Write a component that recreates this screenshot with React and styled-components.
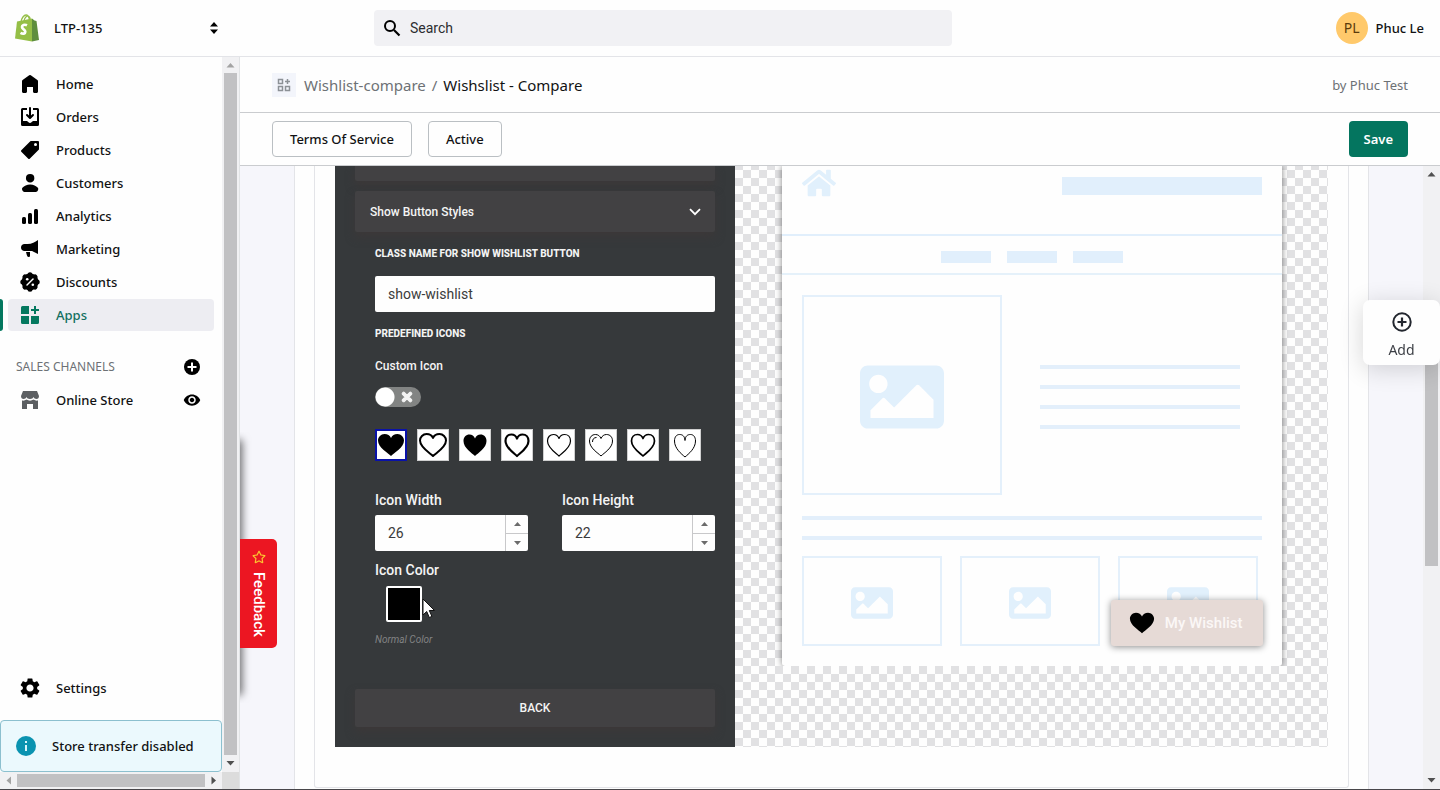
import { useState } from 'react'
import styled, { createGlobalStyle } from 'styled-components'
import { MdSettings, MdVisibility } from 'react-icons/md'
import { FaHome, FaImage, FaTimes, FaRegStar } from 'react-icons/fa'

const navItems = [
  { name: 'Home', icon: HomeIcon },
  { name: 'Orders', icon: OrdersIcon },
  { name: 'Products', icon: ProductsIcon },
  { name: 'Customers', icon: CustomersIcon },
  { name: 'Analytics', icon: AnalyticsIcon },
  { name: 'Marketing', icon: MarketingIcon },
  { name: 'Discounts', icon: DiscountsIcon },
  { name: 'Apps', icon: AppsIcon },
]

const wide =
  'M16 26 C13 23 3 17.500 3 10.500 C3 7 6 4 9.500 4 C12.500 4 15 5.500 16 8 C17 5.500 19.500 4 22.500 4 C26 4 29 7 29 10.500 C29 17.500 19 23 16 26 Z'
const round =
  'M16 26 C13 23 4.500 18 4.500 11 C4.500 7 7 4.500 10.500 4.500 C13 4.500 15 6 16 8.500 C17 6 19 4.500 21.500 4.500 C25 4.500 27.500 7 27.500 11 C27.500 18 19 23 16 26 Z'
const slim =
  'M16 27 C12.500 24 5.500 18.500 5.500 11 C5.500 7 7.500 4.500 10.500 4.500 C13.500 4.500 15.700 6 16 10.500 C16.300 6 18.500 4.500 21.500 4.500 C24.500 4.500 26.500 7 26.500 11 C26.500 18.500 19.500 24 16 27 Z'

const hearts = [
  { d: wide, filled: true, stroke: 0 },
  { d: wide, stroke: 2 },
  { d: round, filled: true, stroke: 0 },
  { d: round, stroke: 2.2 },
  { d: round, stroke: 1.2 },
  { d: round, stroke: 1, shine: true },
  { d: round, stroke: 1.7 },
  { d: slim, stroke: 1 },
]

export default function App() {
  return (
    <Page>
      <GlobalStyle />
      <Header>
        <StoreSwitch type="button">
          <ShopLogo />
          <span>LTP-135</span>
          <svg width="20" height="20" viewBox="0 0 20 20">
            <path d="M10 4l4 4.500H6zM10 16l-4-4.500h8z" />
          </svg>
        </StoreSwitch>
        <SearchBox>
          <svg width="20" height="20" viewBox="0 0 20 20" fill="none">
            <circle cx="8" cy="8" r="5" stroke="#000" strokeWidth="2" />
            <path d="M12 12l5.500 5.500" stroke="#000" strokeWidth="2.200" />
          </svg>
          <input type="search" aria-label="Search" placeholder="Search" />
        </SearchBox>
        <User type="button">
          <Avatar>PL</Avatar>
          Phuc Le
        </User>
      </Header>
      <Body>
        <Sidebar />
        <Main>
          <TitleBar>
            <AppBadge>
              <svg width="14" height="14" viewBox="0 0 14 14" fill="none" stroke="#8c9196" strokeWidth="1.500">
                <path d="M1.500 1.500h4v4h-4zM1.500 8.500h4v4h-4zM8.500 8.500h4v4h-4zM10.500 1v5M8 3.500h5" />
              </svg>
            </AppBadge>
            <Crumbs>
              <a href="#app">Wishlist-compare</a>
              <span>/</span>
              <h1>Wishslist - Compare</h1>
            </Crumbs>
            <Author>by Phuc Test</Author>
          </TitleBar>
          <ActionBar>
            <Button type="button">Terms Of Service</Button>
            <Button type="button">Active</Button>
            <Button type="button" $primary>
              Save
            </Button>
          </ActionBar>
          <Content>
            <Scroll>
              <Sheet>
                <Card>
                  <Settings />
                  <Preview />
                </Card>
              </Sheet>
            </Scroll>
            <VerticalBar before={25} thumb={40} after={35} />
          </Content>
        </Main>
      </Body>
      <DrawerEdge />
      <Feedback type="button">
        <FaRegStar size={14} color="#fbc531" />
        Feedback
      </Feedback>
      <AddButton type="button">
        <svg width="20" height="20" viewBox="0 0 20 20" fill="none" stroke="#23272f">
          <circle cx="10" cy="10" r="8.700" strokeWidth="2" />
          <path d="M10 5.500v9M5.500 10h9" strokeWidth="2.200" />
        </svg>
        Add
      </AddButton>
    </Page>
  )
}

function Sidebar() {
  return (
    <Aside>
      <SideRow>
        <Nav>
          {navItems.map(({ name, icon: Icon }) => (
            <NavLink key={name} href={`#${name}`} $active={name === 'Apps'}>
              <Icon />
              {name}
            </NavLink>
          ))}
          <SectionTitle>
            <h2>SALES CHANNELS</h2>
            <IconButton type="button" aria-label="Add channel">
              <svg width="16" height="16" viewBox="0 0 16 16">
                <circle cx="8" cy="8" r="8" />
                <path d="M8 3.500v9M3.500 8h9" stroke="#fff" strokeWidth="2" />
              </svg>
            </IconButton>
          </SectionTitle>
          <ChannelRow>
            <NavLink href="#store">
              <StoreIcon />
              Online Store
            </NavLink>
            <IconButton type="button" aria-label="View store">
              <MdVisibility size={18} />
            </IconButton>
          </ChannelRow>
          <Bottom>
            <NavLink href="#settings">
              <MdSettings size={20} viewBox="2 2 20 20" />
              Settings
            </NavLink>
          </Bottom>
          <Notice>
            <svg width="20" height="20" viewBox="0 0 20 20">
              <circle cx="10" cy="10" r="10" fill="#0a93b0" />
              <path d="M9 9h2v6H9zM9 5h2v2H9z" fill="#d8f5fb" />
            </svg>
            Store transfer disabled
          </Notice>
        </Nav>
        <VerticalBar before={0} thumb={100} after={0} muted />
      </SideRow>
      <BottomBar>
        <HorizontalTrack>
          <svg width="17" height="9" viewBox="0 0 17 9" fill="#a3a3a3">
            <path d="M11 0.500v8L6.500 4.500z" />
          </svg>
          <HorizontalThumb />
          <svg width="17" height="9" viewBox="0 0 17 9" fill="#505050">
            <path d="M6.500 0.500v8L11 4.500z" />
          </svg>
        </HorizontalTrack>
        <Corner />
      </BottomBar>
    </Aside>
  )
}

function Settings() {
  const [className, setClassName] = useState('show-wishlist')
  const [custom, setCustom] = useState(false)
  const [selected, setSelected] = useState(0)
  const [width, setWidth] = useState(26)
  const [height, setHeight] = useState(22)

  return (
    <Panel>
      <PreviousSection />
      <SectionHeader type="button" aria-expanded="true">
        Show Button Styles
        <svg width="12" height="8" viewBox="0 0 12 8" fill="none">
          <path d="M1 1.200l5 5 5-5" stroke="#fff" strokeWidth="1.800" />
        </svg>
      </SectionHeader>
      <Fields>
        <CapsLabel htmlFor="class-name">Class name for show wishlist button</CapsLabel>
        <TextInput
          id="class-name"
          value={className}
          onChange={(e) => setClassName(e.target.value)}
        />
        <CapsLabel as="h3">Predefined icons</CapsLabel>
        <SmallLabel htmlFor="custom-icon">Custom Icon</SmallLabel>
        <Toggle>
          <input
            id="custom-icon"
            type="checkbox"
            role="switch"
            checked={custom}
            onChange={(e) => setCustom(e.target.checked)}
          />
          <FaTimes size={14} />
        </Toggle>
        <IconList>
          {hearts.map((heart, i) => (
            <IconOption
              key={i}
              type="button"
              aria-label={`Icon ${i + 1}`}
              $selected={selected === i}
              onClick={() => setSelected(i)}
            >
              <Heart {...heart} size={28} />
            </IconOption>
          ))}
        </IconList>
        <Sizes>
          <NumberField id="icon-width" label="Icon Width" value={width} onChange={setWidth} />
          <NumberField id="icon-height" label="Icon Height" value={height} onChange={setHeight} />
        </Sizes>
        <FieldLabel as="h3">Icon Color</FieldLabel>
        <ColorRow>
          <Swatch type="button" aria-label="Icon Color" />
          <Cursor width="14" height="21" viewBox="0 0 14 21">
            <path
              d="M1 1v16l3.700-3.500 2.600 6 2.600-1.100-2.600-5.900h5.200z"
              fill="#fff"
              stroke="#111"
            />
          </Cursor>
        </ColorRow>
        <Hint>Normal Color</Hint>
      </Fields>
      <BackButton type="button">BACK</BackButton>
    </Panel>
  )
}

function NumberField({ id, label, value, onChange }) {
  return (
    <div>
      <FieldLabel htmlFor={id}>{label}</FieldLabel>
      <NumberBox>
        <input
          id={id}
          inputMode="numeric"
          value={value}
          onChange={(e) => onChange(Number(e.target.value) || 0)}
        />
        <Spinner>
          <button type="button" aria-label={`Increase ${label}`} onClick={() => onChange(value + 1)}>
            <svg width="7" height="4" viewBox="0 0 7 4">
              <path d="M0 4L3.500 0 7 4z" />
            </svg>
          </button>
          <button type="button" aria-label={`Decrease ${label}`} onClick={() => onChange(value - 1)}>
            <svg width="7" height="4" viewBox="0 0 7 4">
              <path d="M0 0l3.500 4L7 0z" />
            </svg>
          </button>
        </Spinner>
      </NumberBox>
    </div>
  )
}

function Preview() {
  return (
    <Checker>
      <Clip>
        <MockPage>
          <MockTop>
            <FaHome size={34} />
            <Block $w={200} $h={18} />
          </MockTop>
          <MockNav>
            <Block $w={50} $h={12} />
            <Block $w={50} $h={12} />
            <Block $w={50} $h={12} />
          </MockNav>
          <MockBody>
            <Product>
              <ImageBox $w={200} $h={200}>
                <FaImage size={84} />
              </ImageBox>
              <Summary>
                <Line />
                <Line />
                <Line />
                <Line />
              </Summary>
            </Product>
            <Lines>
              <Line />
              <Line />
            </Lines>
            <Thumbs>
              {[0, 1, 2].map((n) => (
                <ImageBox key={n} $w={140} $h={90}>
                  <FaImage size={42} />
                </ImageBox>
              ))}
            </Thumbs>
          </MockBody>
          <WishlistButton type="button">
            <Heart d={wide} filled stroke={0} size={26} />
            My Wishlist
          </WishlistButton>
        </MockPage>
      </Clip>
    </Checker>
  )
}

function VerticalBar({ before, thumb, after, muted }) {
  return (
    <Track>
      <svg width="17" height="16" viewBox="0 0 17 16" fill={muted ? '#a3a3a3' : '#505050'}>
        <path d="M4.500 10.500h8L8.500 6z" />
      </svg>
      <Portion $grow={before} />
      <Thumb $grow={thumb} />
      <Portion $grow={after} />
      <svg width="17" height="17" viewBox="0 0 17 17" fill="#505050">
        <path d="M4.500 6h8l-4 4.500z" />
      </svg>
    </Track>
  )
}

function Heart({ d, filled, stroke, shine, size }) {
  return (
    <svg width={size} height={size} viewBox="2 1 28 28">
      <path
        d={d}
        fill={filled ? '#000' : 'none'}
        stroke="#000"
        strokeWidth={stroke}
        strokeLinejoin="round"
      />
      {shine && <path d="M7.500 12c0-3 1.500-4.500 4-4.500" fill="none" stroke="#000" strokeWidth="1" />}
    </svg>
  )
}

function ShopLogo() {
  return (
    <svg width="24" height="28" viewBox="0 0 24 28" fill="none">
      <path d="M6 8c.5-4 3-7 5-7 2 0 3 2 3.500 5M9 7c.5-3.500 3-5.500 4.500-5 1.200.5 1.700 2 2 4" stroke="#95bf47" strokeWidth="1.300" />
      <path d="M2 7.500l15-3v23L0 24.500z" fill="#95bf47" />
      <path d="M17 4.500l2.500 2 2 .5L24 26l-7 1.500z" fill="#5e8e3e" />
      <path
        d="M12 11.300c-2.500-1.200-5-.3-5 1.800 0 2.300 3.300 2.300 3.300 4.600 0 2-2.300 2.600-4.800 1.100"
        stroke="#fff"
        strokeWidth="2.700"
      />
    </svg>
  )
}

function NavSvg({ children }) {
  return (
    <svg width="20" height="20" viewBox="0 0 20 20" fill="currentColor">
      {children}
    </svg>
  )
}

function HomeIcon() {
  return (
    <NavSvg>
      <path d="M18 7.261V17.500c0 .841-.672 1.500-1.500 1.500h-2c-.828 0-1.500-.659-1.500-1.500V13H7v4.477C7 18.318 6.328 19 5.500 19h-2c-.828 0-1.500-.682-1.500-1.523V7.261a1.500 1.500 0 0 1 .615-1.210l6.590-4.820a1.481 1.481 0 0 1 1.590 0l6.590 4.820A1.500 1.500 0 0 1 18 7.260z" />
    </NavSvg>
  )
}

function OrdersIcon() {
  return (
    <NavSvg>
      <path d="M11 1a1 1 0 1 0-2 0v7.586L7.707 7.293a1 1 0 0 0-1.414 1.414l3 3a1 1 0 0 0 1.414 0l3-3a1 1 0 0 0-1.414-1.414L11 8.586V1z" />
      <path d="M3 14V3h4V1H2.500A1.500 1.500 0 0 0 1 2.500v15A1.500 1.500 0 0 0 2.500 19h15a1.500 1.500 0 0 0 1.500-1.500v-15A1.500 1.500 0 0 0 17.500 1H13v2h4v11h-3.500c-.775 0-1.388.662-1.926 1.244l-.110.120A1.994 1.994 0 0 1 10 16a1.994 1.994 0 0 1-1.463-.637l-.111-.120C7.888 14.664 7.275 14 6.500 14H3z" />
    </NavSvg>
  )
}

function ProductsIcon() {
  return (
    <NavSvg>
      <path
        fillRule="evenodd"
        d="M10.293 1.293A1 1 0 0 1 11 1h7a1 1 0 0 1 1 1v7a1 1 0 0 1-.293.707l-9 9a1 1 0 0 1-1.414 0l-7-7a1 1 0 0 1 0-1.414l9-9zM15.500 6a1.500 1.500 0 1 0 0-3 1.500 1.500 0 0 0 0 3z"
      />
    </NavSvg>
  )
}

function CustomersIcon() {
  return (
    <NavSvg>
      <path d="M14.363 5.220a4.220 4.220 0 1 1-8.439 0 4.220 4.220 0 0 1 8.439 0zM2.670 14.469c1.385-1.090 4.141-2.853 7.474-2.853 3.332 0 6.089 1.764 7.474 2.853.618.486.810 1.308.567 2.056l-.333 1.020A2.110 2.110 0 0 1 15.846 19H4.441a2.110 2.110 0 0 1-2.005-1.455l-.333-1.020c-.245-.748-.052-1.570.567-2.056z" />
    </NavSvg>
  )
}

function AnalyticsIcon() {
  return (
    <NavSvg>
      <rect x="2" y="11" width="4" height="7" rx="1.500" />
      <rect x="8" y="7" width="4" height="11" rx="1.500" />
      <rect x="14" y="3" width="4" height="15" rx="1.500" />
    </NavSvg>
  )
}

function MarketingIcon() {
  return (
    <NavSvg>
      <path d="M18 1v14l-6-3H4.500C2.500 12 1 10.500 1 8.500S2.500 5 4.500 5h3C12 5 15 3 18 1zM6 13h4v3.500c0 1-.5 1.500-1.500 1.500S7 17 6 13z" />
    </NavSvg>
  )
}

function DiscountsIcon() {
  const lobes = [0, 45, 90, 135, 180, 225, 270, 315]
  return (
    <NavSvg>
      <circle cx="10" cy="10" r="8.500" />
      {lobes.map((a) => (
        <circle key={a} cx="10" cy="2.800" r="2.500" transform={`rotate(${a} 10 10)`} />
      ))}
      <path d="M7 13l6-6" stroke="#fff" strokeWidth="1.500" strokeLinecap="round" />
      <circle cx="7.200" cy="7.200" r="1.300" fill="#fff" />
      <circle cx="12.800" cy="12.800" r="1.300" fill="#fff" />
    </NavSvg>
  )
}

function AppsIcon() {
  return (
    <NavSvg>
      <path d="M2.500 1H9v8H1V2.500A1.500 1.500 0 0 1 2.500 1zM1 11h8v8H2.500A1.500 1.500 0 0 1 1 17.500zM11 11h8v6.500a1.500 1.500 0 0 1-1.500 1.500H11zM14 1h2v3h3v2h-3v3h-2V6h-3V4h3z" />
    </NavSvg>
  )
}

function StoreIcon() {
  return (
    <NavSvg>
      <path
        fill="#5c5f62"
        d="M3 1h14l2 5c0 1.700-1 3-2.500 3S14 8 13.500 7C13 8.300 12 9 10 9S7 8.300 6.500 7C6 8 5 9 3.500 9S1 7.700 1 6zM2 10.500c1.500.4 3.300 0 4.500-1 2 1.500 5 1.500 7 0 1.200 1 3 1.400 4.500 1V19h-5v-5H7v5H2z"
      />
    </NavSvg>
  )
}

const GlobalStyle = createGlobalStyle`
  * {
    box-sizing: border-box;
  }
  body {
    margin: 0;
    color: #111213;
    background: #fefefe;
    font: 500 13px/20px 'Noto Sans', sans-serif;
  }
  h1, h2, h3, p {
    margin: 0;
    font-size: inherit;
    font-weight: inherit;
  }
  a {
    color: inherit;
    text-decoration: none;
  }
  button, input {
    font: inherit;
    color: inherit;
    border: none;
  }
  button {
    padding: 0;
    background: none;
    cursor: pointer;
  }
  svg {
    display: block;
    flex: none;
  }
`

const Page = styled.div`
  display: flex;
  flex-direction: column;
  height: 100vh;
  overflow: hidden;
  border-bottom: 1px solid #48464a;
`

const Header = styled.header`
  display: grid;
  grid-template-columns: 240px 1fr 240px;
  align-items: center;
  height: 57px;
  flex: none;
  border-bottom: 1px solid #e3e4e8;
`

const StoreSwitch = styled.button`
  display: flex;
  align-items: center;
  gap: 15px;
  padding: 0 16px 0 15px;

  span {
    flex: 1;
    text-align: left;
  }
`

const SearchBox = styled.label`
  display: flex;
  align-items: center;
  gap: 8px;
  max-width: 578px;
  width: 70%;
  height: 36px;
  margin-left: 134px;
  padding: 0 8px;
  border-radius: 4px;
  background: #f1f1f4;

  input {
    flex: 1;
    min-width: 0;
    padding: 0;
    background: none;
    outline: none;
    font: 400 14px/20px Roboto, sans-serif;
  }
  input::placeholder {
    color: #2c2d30;
  }
`

const User = styled.button`
  display: flex;
  align-items: center;
  justify-content: flex-end;
  gap: 8px;
  padding-right: 16px;
`

const Avatar = styled.span`
  display: grid;
  place-items: center;
  width: 32px;
  height: 32px;
  border-radius: 50%;
  background: #ffc96b;
  color: #5a3a0c;
  font-size: 14px;
  font-weight: 400;
`

const Body = styled.div`
  display: flex;
  flex: 1;
  min-height: 0;
`

const Aside = styled.aside`
  display: flex;
  flex-direction: column;
  width: 240px;
  flex: none;
  border-right: 1px solid #e1e3e5;
`

const SideRow = styled.div`
  display: flex;
  flex: 1;
  min-height: 0;
`

const Nav = styled.nav`
  display: flex;
  flex-direction: column;
  gap: 1px;
  flex: 1;
  padding-top: 11px;
`

const NavLink = styled.a`
  position: relative;
  display: flex;
  align-items: center;
  gap: 16px;
  height: 32px;
  margin: 0 8px;
  padding-left: 12px;
  border-radius: 4px;
  color: ${(props) => (props.$active ? '#12705f' : '#111213')};
  background: ${(props) => (props.$active ? '#ededf2' : 'none')};

  svg {
    color: ${(props) => (props.$active ? '#04785f' : '#000')};
  }

  &::before {
    content: '';
    display: ${(props) => (props.$active ? 'block' : 'none')};
    position: absolute;
    left: -8px;
    width: 3px;
    height: 32px;
    border-radius: 0 4px 4px 0;
    background: #04785f;
  }
`

const SectionTitle = styled.div`
  display: flex;
  align-items: center;
  justify-content: space-between;
  height: 32px;
  margin-top: 19px;
  padding: 0 18px 0 16px;
  color: #6d7175;
  font-size: 12px;
  font-weight: 400;
`

const IconButton = styled.button`
  display: grid;
  place-items: center;
  width: 24px;
  height: 24px;
  color: #000;
`

const ChannelRow = styled.div`
  display: flex;
  align-items: center;
  justify-content: space-between;
  padding-right: 18px;
`

const Bottom = styled.div`
  margin-top: auto;
  margin-bottom: 15px;
`

const Notice = styled.div`
  display: flex;
  align-items: center;
  gap: 16px;
  height: 52px;
  padding: 0 15px;
  border: 1px solid #8cc0cf;
  border-radius: 4px;
  background: #ebf9fd;
`

const Track = styled.div`
  display: flex;
  flex-direction: column;
  align-items: center;
  width: 17px;
  flex: none;
  background: #f1f1f3;
`

const Portion = styled.div`
  flex: ${(props) => props.$grow} 0 0;
`

const Thumb = styled(Portion)`
  width: 13px;
  background: #c1c1c3;
`

const BottomBar = styled.div`
  display: flex;
  height: 17px;
  flex: none;
`

const HorizontalTrack = styled.div`
  display: flex;
  align-items: center;
  flex: 1;
  background: #f1f1f3;
`

const HorizontalThumb = styled.div`
  flex: 1;
  height: 13px;
  background: #c1c1c3;
`

const Corner = styled.div`
  width: 17px;
  background: #dcdcdc;
`

const Main = styled.main`
  display: flex;
  flex-direction: column;
  flex: 1;
  min-width: 0;
`

const TitleBar = styled.div`
  display: flex;
  align-items: center;
  gap: 8px;
  height: 56px;
  padding: 0 32px;
  border-bottom: 1px solid #cacccf;
`

const AppBadge = styled.span`
  display: grid;
  place-items: center;
  width: 24px;
  height: 24px;
  background: #f3f5fb;
`

const Crumbs = styled.div`
  display: flex;
  gap: 6px;
  flex: 1;
  color: #6d7175;
  font-size: 15px;
  font-weight: 400;

  h1 {
    color: #111213;
  }
`

const Author = styled.span`
  color: #6d7175;
  font-weight: 400;
`

const ActionBar = styled.div`
  display: flex;
  align-items: center;
  gap: 16px;
  height: 53px;
  padding: 0 32px;
  border-bottom: 1px solid #cacccf;
`

const Button = styled.button`
  height: 36px;
  padding: 0 ${(props) => (props.$primary ? 15 : 17)}px;
  border: ${(props) => (props.$primary ? 'none' : '1px solid #babfc3')};
  border-radius: 4px;
  margin-left: ${(props) => (props.$primary ? 'auto' : '0')};
  color: ${(props) => (props.$primary ? '#fff' : '#111213')};
  background: ${(props) => (props.$primary ? '#04755f' : '#fefefe')};
  font-weight: ${(props) => (props.$primary ? 600 : 500)};
`

const Content = styled.div`
  display: flex;
  flex: 1;
  min-height: 0;
`

const Scroll = styled.div`
  flex: 1;
  min-width: 0;
  padding: 0 54px;
  overflow: hidden;
  background: #f6f6fb;
`

const Sheet = styled.section`
  padding: 0 19px 100px;
  border: solid #e3e4e8;
  border-width: 0 1px;
  background: #fefefe;
`

const Card = styled.div`
  display: flex;
  padding: 0 20px 40px;
  border: solid #e3e4e8;
  border-width: 0 1px 1px;
  border-radius: 0 0 3px 3px;
`

const Panel = styled.section`
  display: flex;
  flex-direction: column;
  width: 400px;
  flex: none;
  padding: 0 20px 20px;
  color: #f4f4f4;
  background: #36393b;
  font-family: Roboto, sans-serif;
`

const PreviousSection = styled.div`
  height: 15px;
  border-radius: 0 0 2px 2px;
  background: #424143;
  box-shadow: 0 5px 10px #3c3839;
`

const SectionHeader = styled.button`
  display: flex;
  align-items: center;
  justify-content: space-between;
  height: 41px;
  margin-top: 10px;
  padding: 0 14px 0 15px;
  border-radius: 2px;
  background: #424143;
  box-shadow: 0 5px 10px #3c3839;
  font-size: 12px;
`

const Fields = styled.div`
  display: flex;
  flex-direction: column;
  align-items: stretch;
  padding: 14px 0 41px 20px;
`

const CapsLabel = styled.label`
  font-size: 10px;
  font-weight: 800;
  line-height: 16px;
  text-transform: uppercase;
`

const TextInput = styled.input`
  height: 36px;
  margin: 14px 0;
  padding: 0 13px;
  border-radius: 2px;
  color: #3b3b3b;
  background: #fefefe;
  font-size: 14px;
  font-weight: 400;
`

const SmallLabel = styled.label`
  margin-top: 16px;
  font-size: 12px;
  line-height: 16px;
`

const Toggle = styled.span`
  display: grid;
  align-items: center;
  width: 46px;
  margin-top: 13px;

  input {
    grid-area: 1 / 1;
    appearance: none;
    width: 46px;
    height: 20px;
    margin: 0;
    border-radius: 10px;
    background: radial-gradient(circle at 10px 10px, #fff 9px, #828483 10px);
    cursor: pointer;
  }
  svg {
    grid-area: 1 / 1;
    margin-left: 25px;
    stroke: #f4f4f4;
    stroke-width: 40px;
    pointer-events: none;
  }
`

const IconList = styled.div`
  display: flex;
  gap: 10px;
  margin: 22px 0 31px;
`

const IconOption = styled.button`
  display: grid;
  place-items: center;
  width: 32px;
  height: 32px;
  border: ${(props) => (props.$selected ? '2px solid #0a12a8' : '1px solid #cfcfcf')};
  background: #fff;
`

const Sizes = styled.div`
  display: grid;
  grid-template-columns: repeat(2, minmax(0, 1fr));
  gap: 34px;
  margin-bottom: 11px;
`

const FieldLabel = styled.label`
  display: block;
  font-size: 14px;
  line-height: 16px;
`

const NumberBox = styled.div`
  display: flex;
  height: 36px;
  margin-top: 7px;
  border-radius: 2px;
  overflow: hidden;
  background: #fefefe;
  color: #3b3b3b;

  input {
    flex: 1;
    min-width: 0;
    padding: 0 13px;
    background: none;
    font-size: 14px;
    font-weight: 400;
  }
`

const Spinner = styled.div`
  display: grid;
  grid-template-rows: 1fr 1fr;
  width: 23px;
  flex: none;
  border-left: 1px solid #c8c8ca;

  button {
    display: grid;
    place-items: center;
    fill: #6b6b6b;
  }
  button + button {
    border-top: 1px solid #c8c8ca;
  }
`

const ColorRow = styled.div`
  display: flex;
  margin: 8px 0 10px;
  padding-left: 11px;
`

const Swatch = styled.button`
  width: 36px;
  height: 36px;
  border: 2px solid #fff;
  border-radius: 2px;
  background: #000;
`

const Cursor = styled.svg`
  margin-top: 12px;
`

const Hint = styled.p`
  color: #828384;
  font-size: 10px;
  font-style: italic;
  font-weight: 400;
  line-height: 16px;
`

const BackButton = styled.button`
  height: 38px;
  border-radius: 2px;
  background: #424143;
  box-shadow: 0 5px 10px #3c3839;
  font-size: 12px;
`

const Checker = styled.section`
  flex: 1;
  min-width: 0;
  background: repeating-conic-gradient(#e1e1e3 0 25%, #fefefe 0 50%) 0 4px / 16px 16px;
`

const Clip = styled.div`
  display: flex;
  justify-content: center;
  overflow: hidden;
`

const MockPage = styled.div`
  position: relative;
  width: 500px;
  background: #fefefe;
  box-shadow: 0 0 6px rgba(0, 0, 0, 0.5);
  border-radius: 0 0 3px 3px;
  color: #e1f0fc;
`

const MockTop = styled.div`
  display: flex;
  justify-content: space-between;
  height: 70px;
  padding: 0 20px;
  border-bottom: 2px solid #e1effc;

  > div {
    margin-top: 11px;
  }
`

const MockNav = styled.div`
  display: flex;
  justify-content: center;
  gap: 16px;
  padding: 15px 0 10px;
  border-bottom: 2px solid #e5f1fa;
`

const Block = styled.div`
  width: ${(props) => props.$w}px;
  height: ${(props) => props.$h}px;
  background: #e1effc;
`

const MockBody = styled.div`
  display: flex;
  flex-direction: column;
  padding: 20px;
`

const Product = styled.div`
  display: flex;
  align-items: center;
  gap: 38px;
  margin-bottom: 21px;
`

const ImageBox = styled.div`
  display: grid;
  place-items: center;
  width: ${(props) => props.$w}px;
  height: ${(props) => props.$h}px;
  padding-top: 4px;
  border: 2px solid #e4f0fb;
`

const Lines = styled.div`
  display: grid;
  gap: 16px;
`

const Summary = styled(Lines)`
  width: 200px;
  padding-top: 4px;
`

const Line = styled.div`
  height: 4px;
  background: #e3effb;
`

const Thumbs = styled.div`
  display: flex;
  gap: 18px;
  margin-top: 16px;
`

const WishlistButton = styled.button`
  position: absolute;
  right: 19px;
  bottom: 20px;
  display: flex;
  align-items: center;
  gap: 10px;
  height: 46px;
  padding: 0 20px 0 18px;
  border-radius: 3px;
  background: #e6dad6;
  box-shadow: 0 1px 7px rgba(0, 0, 0, 0.45);
  color: #fbf7f6;
  font: 500 15px/20px Roboto, sans-serif;
`

/* edge of the closed drawer, only its shadow shows */
const DrawerEdge = styled.div`
  position: fixed;
  left: 230px;
  top: 440px;
  width: 10px;
  height: 255px;
  box-shadow: 2px 0 8px rgba(0, 0, 0, 0.6);
  clip-path: inset(-8px -16px -8px 10px);
`

const Feedback = styled.button`
  position: fixed;
  left: 240px;
  top: 539px;
  display: flex;
  align-items: center;
  gap: 8px;
  width: 37px;
  height: 109px;
  padding: 11px 0;
  writing-mode: vertical-rl;
  border-radius: 0 5px 5px 0;
  background: #ec1622;
  color: #fff;
  font: 500 15px/20px Roboto, sans-serif;
`

const AddButton = styled.button`
  position: fixed;
  right: 0;
  top: 300px;
  display: flex;
  flex-direction: column;
  align-items: center;
  justify-content: center;
  gap: 8px;
  width: 77px;
  height: 65px;
  padding-top: 7px;
  border-radius: 7px;
  background: #fefefe;
  box-shadow: 0 4px 24px rgba(0, 0, 0, 0.16);
  color: #3c3f45;
  font-size: 14px;
  font-weight: 400;
`
